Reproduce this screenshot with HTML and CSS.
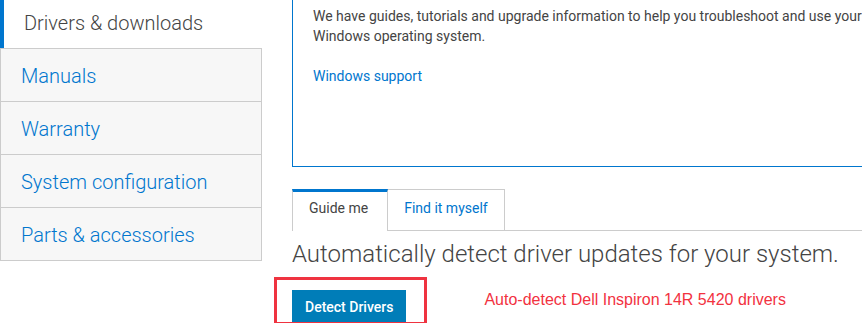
FILE: index.html
```
<!DOCTYPE html>
<html lang="en">
<head>
    <meta charset="UTF-8">
    <meta name="viewport" content="width=device-width, initial-scale=1.0">
    <title>Drivers &amp; downloads</title>
    <link rel="stylesheet" href="styles.css">
</head>
<body>
    <div class="page">
        <!-- Left side navigation -->
        <nav class="side-nav">
            <div class="nav-current">Drivers &amp; downloads</div>
            <ul class="nav-list">
                <li><a href="#">Manuals</a></li>
                <li><a href="#">Warranty</a></li>
                <li><a href="#">System configuration</a></li>
                <li><a href="#">Parts &amp; accessories</a></li>
            </ul>
        </nav>

        <main class="content">
            <div class="info-panel">
                <p>We have guides, tutorials and upgrade information to help you troubleshoot and use your Windows operating system.</p>
                <a href="#" class="panel-link">Windows support</a>
            </div>

            <div class="tabs">
                <button class="tab active">Guide me</button>
                <button class="tab">Find it myself</button>
            </div>

            <h2 class="detect-title">Automatically detect driver updates for your system.</h2>

            <div class="actions">
                <button class="detect-btn">Detect Drivers</button>
                <span class="highlight"></span>
                <span class="note">Auto-detect Dell Inspiron 14R 5420 drivers</span>
            </div>
        </main>
    </div>
</body>
</html>
```

FILE: styles.css
```
html, body {
    overflow: hidden;
}
body {
    margin: 0;
    font-family: Roboto, Arial, sans-serif;
    color: #444;
    background: #fff;
}
.page {
    display: flex;
    gap: 30px;
}

/* side nav */
.side-nav {
    width: 262px;
    flex-shrink: 0;
}
.nav-current {
    border-left: 4px solid #0076ce;
    padding: 11px 20px 13px;
    font-size: 20px;
    font-weight: 300;
    line-height: 24px;
    color: #444;
}
.nav-list {
    list-style: none;
    margin: 0;
    padding: 0;
    background-color: #f7f7f7;
    border: 1px solid #ccc;
    border-top: none;
}
.nav-list li {
    border-top: 1px solid #ccc;
    padding: 15px 20px 13px;
    font-size: 20px;
    line-height: 24px;
}
.nav-list a {
    font-weight: 300;
    color: #0076ce;
    text-decoration: none;
}

/* main content */
.content {
    flex: 1;
    min-width: 0;
}
.info-panel {
    border: 1px solid #0076ce;
    border-top: none;
    margin-right: -120px;
    padding: 6px 20px 80px;
    font-size: 14px;
    line-height: 20px;
}
.info-panel p {
    margin: 0 0 20px;
    max-width: 600px;
}
.panel-link {
    color: #0076ce;
    text-decoration: none;
}

.tabs {
    display: flex;
    margin-top: 22px;
    border-bottom: 1px solid #ccc;
    margin-right: -120px;
}
.tab {
    font-family: Roboto, Arial, sans-serif;
    font-size: 14px;
    line-height: 20px;
    padding: 8px 16px 12px;
    background: #fff;
    border: 1px solid #ccc;
    border-bottom: none;
    color: #0076ce;
    cursor: pointer;
    margin-bottom: -1px;
}
.tab + .tab {
    border-left: none;
    border-bottom: 1px solid #ccc;
}
.tab.active {
    border-top: 3px solid #0076ce;
    padding-top: 6px;
    padding-right: 19px;
    padding-bottom: 13px;
    color: #444;
}

.detect-title {
    margin: 8px 0 0;
    font-size: 24px;
    font-weight: 300;
    line-height: 31px;
    color: #444;
}

.actions {
    position: relative;
    display: flex;
    align-items: flex-start;
    margin-top: 20px;
}
.detect-btn {
    background-color: #007db8;
    color: #fff;
    border: none;
    font-family: Roboto, Arial, sans-serif;
    font-size: 14px;
    font-weight: 500;
    line-height: 20px;
    padding: 7px 13px 6px;
    cursor: pointer;
}
.highlight {
    position: absolute;
    left: -18px;
    top: -13px;
    width: 153px;
    height: 48px;
    box-sizing: border-box;
    border: 3px solid #ef3340;
}
.note {
    margin-left: 78px;
    margin-top: 0;
    font-family: "Liberation Sans Narrow", "Liberation Sans", Arial, sans-serif;
    font-size: 16px;
    line-height: 20px;
    color: #f2323f;
}
```
